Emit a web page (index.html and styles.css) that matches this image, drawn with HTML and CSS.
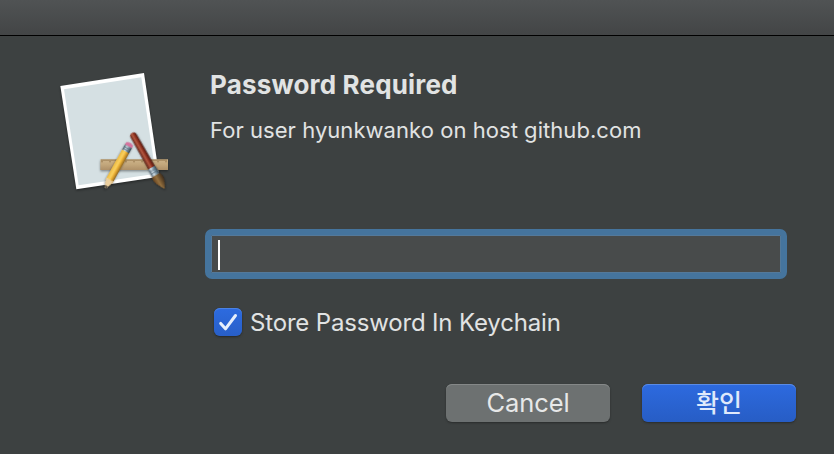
FILE: index.html
```html
<!DOCTYPE html>
<html lang="ko">
<head>
<meta charset="utf-8">
<title>Password Required</title>
<link rel="stylesheet" href="styles.css">
</head>
<body>
<div class="dialog">
  <header class="titlebar"></header>
  <main class="content">
    <svg class="app-icon" viewBox="0 0 390 390" aria-hidden="true">
      <defs>
        <linearGradient id="ruler" x1="0" y1="0" x2="0" y2="1">
          <stop offset="0" stop-color="#cdb48a"/><stop offset=".5" stop-color="#c2a67b"/><stop offset="1" stop-color="#ae9068"/>
        </linearGradient>
        <linearGradient id="pencil" x1="0" y1="0" x2="1" y2="0">
          <stop offset="0" stop-color="#e9b843"/><stop offset=".4" stop-color="#fbd260"/><stop offset=".65" stop-color="#e9ad31"/><stop offset="1" stop-color="#8c6524"/>
        </linearGradient>
        <linearGradient id="handle" x1="0" y1="0" x2="1" y2="0">
          <stop offset="0" stop-color="#5a1c12"/><stop offset=".4" stop-color="#b45a42"/><stop offset=".65" stop-color="#8f3220"/><stop offset="1" stop-color="#48150e"/>
        </linearGradient>
        <linearGradient id="metal" x1="0" y1="0" x2="1" y2="0">
          <stop offset="0" stop-color="#4e6270"/><stop offset=".35" stop-color="#d5e4ed"/><stop offset=".65" stop-color="#7894a5"/><stop offset="1" stop-color="#303c44"/>
        </linearGradient>
        <linearGradient id="bristle" x1="0" y1="0" x2="1" y2="0">
          <stop offset="0" stop-color="#67431f"/><stop offset=".4" stop-color="#94703f"/><stop offset="1" stop-color="#3d2a18"/>
        </linearGradient>
        <filter id="soft" x="-20%" y="-20%" width="140%" height="150%" color-interpolation-filters="sRGB">
          <feDropShadow dx="0" dy="4" stdDeviation="3" flood-opacity=".4"/>
        </filter>
      </defs>
      <path d="M31 63 282 24 328 335 79 373Z" fill="#fff" filter="url(#soft)"/>
      <path d="M42 73 274 37 317 326 86 361Z" fill="#d5e0e3"/>
      <g filter="url(#soft)">
        <path d="M151 283H354V315H151Z" fill="url(#ruler)"/>
        <path d="M156 283v9m6-9v5m6-5v5m6-5v5m6-5v9m6-9v5m6-5v5m6-5v5m6-5v9m6-9v5m6-5v5m6-5v5m6-5v9m6-9v5m6-5v5m6-5v5m6-5v9m6-9v5m6-5v5m6-5v5m6-5v9m6-9v5m6-5v5m6-5v5m6-5v9m6-9v5m6-5v5m6-5v5m6-5v9m6-9v5m6-5v5m6-5v5m6-5v9" stroke="#806138" stroke-width="2.4" fill="none"/>
      </g>
      <g transform="translate(250 211) rotate(-29.5)" filter="url(#soft)">
        <path d="M-10 0Q-9-8 0-8T10 0L11 112H-11Z" fill="url(#handle)"/>
        <path d="M-12 111H12L13 137H-13Z" fill="url(#metal)"/>
        <path d="M-12 120H12M-12 128H12" stroke="#52646f" stroke-width="2"/>
        <path d="M-13 137H13C23 151 14 168 3 187C-5 172-20 153-13 137Z" fill="url(#bristle)"/>
      </g>
      <g transform="translate(237 241) rotate(29)" filter="url(#soft)">
        <path d="M-12 4V-1Q-11-8 0-8T12-1V4Z" fill="#d5749e"/>
        <path d="M-12 4H12V22H-12Z" fill="url(#metal)"/>
        <path d="M-12 10H12M-12 16H12" stroke="#52646f" stroke-width="2"/>
        <path d="M-12 21H12V121L1 148-12 121Z" fill="url(#pencil)"/>
        <path d="M-12 119Q-7 113-3 120Q1 113 5 120Q9 115 12 119L3 147H-2Z" fill="#ebcf9e"/>
        <path d="M-4 139H5L1 151Z" fill="#50483e"/>
      </g>
    </svg>
    <section class="form">
      <h1 class="title">Password Required</h1>
      <p class="message">For user hyunkwanko on host github.com</p>
      <div class="field"><span class="caret"></span></div>
      <div class="option">
        <span class="checkbox"><svg viewBox="0 0 28 28"><path d="M6.7 15.4 11.5 20.8 21.5 7.5"/></svg></span>
        <span class="option-label">Store Password In Keychain</span>
      </div>
      <div class="actions">
        <button class="button cancel">Cancel</button>
        <button class="button confirm">확인</button>
      </div>
    </section>
  </main>
</div>
</body>
</html>
```
FILE: styles.css
```css
* { box-sizing: border-box; }
body {
  margin: 0;
  background: #3d4141;
  color: #e1e3e3;
  font-family: Inter, "Noto Sans CJK KR", sans-serif;
}
.dialog { height: 454px; overflow: hidden; }
.titlebar {
  height: 36px;
  background: linear-gradient(#505354, #434546);
  border-bottom: 1px solid #000;
}
.content {
  display: grid;
  grid-template-columns: 130px 1fr;
  column-gap: 25px;
  padding: 29px 38px 0 50px;
}
.app-icon { width: 130px; height: 130px; }
.form { display: flex; flex-direction: column; }
.title {
  margin: 3px 0 0 5px;
  font-size: 26px;
  line-height: 34px;
  font-weight: 700;
  letter-spacing: .18px;
  white-space: nowrap;
}
.message {
  margin: 13px 0 0 5px;
  font-size: 22px;
  line-height: 30px;
  letter-spacing: .05px;
  white-space: nowrap;
}
.field {
  width: 582px;
  height: 50px;
  margin-top: 84px;
  padding: 5px 7px;
  border: 6px solid #45749d;
  border-radius: 7px;
  background: #484b4b;
  box-shadow: inset 0 0 0 1px #54799a;
}
.caret { display: block; width: 2px; height: 30px; background: #fff; }
.option {
  display: flex;
  align-items: center;
  gap: 8px;
  height: 28px;
  margin: 29px 0 0 9px;
}
.checkbox {
  width: 28px;
  height: 28px;
  border-radius: 6px;
  background: linear-gradient(#2d6be0, #285fc8);
  box-shadow: inset 0 1px #4b82e4, 0 1px 2px #242828;
}
.checkbox svg { display: block; width: 28px; height: 28px; }
.checkbox path { fill: none; stroke: #e6effc; stroke-width: 3; stroke-linecap: round; stroke-linejoin: round; }
.option-label {
  padding-top: 2px;
  font-size: 24px;
  line-height: 28px;
  letter-spacing: -.17px;
  white-space: nowrap;
}
.actions { display: flex; gap: 32px; margin: 48px 0 0 241px; }
.button {
  height: 38px;
  padding: 0;
  border: 0;
  border-radius: 6px;
  font-family: inherit;
  font-size: 25.5px;
  line-height: 38px;
  letter-spacing: -.1px;
  color: #e7e8e8;
}
.cancel { width: 164px; background: #6d7171; box-shadow: inset 0 1px #858888, 0 1px 2px #292c2c; }
.confirm { width: 154px; font-size: 25px; font-weight: 500; line-height: 34px; color: #dfe9fb; background: linear-gradient(#2d6adf, #275dc5); box-shadow: inset 0 1px #5a8be5, 0 1px 2px #292c2c; }
```
